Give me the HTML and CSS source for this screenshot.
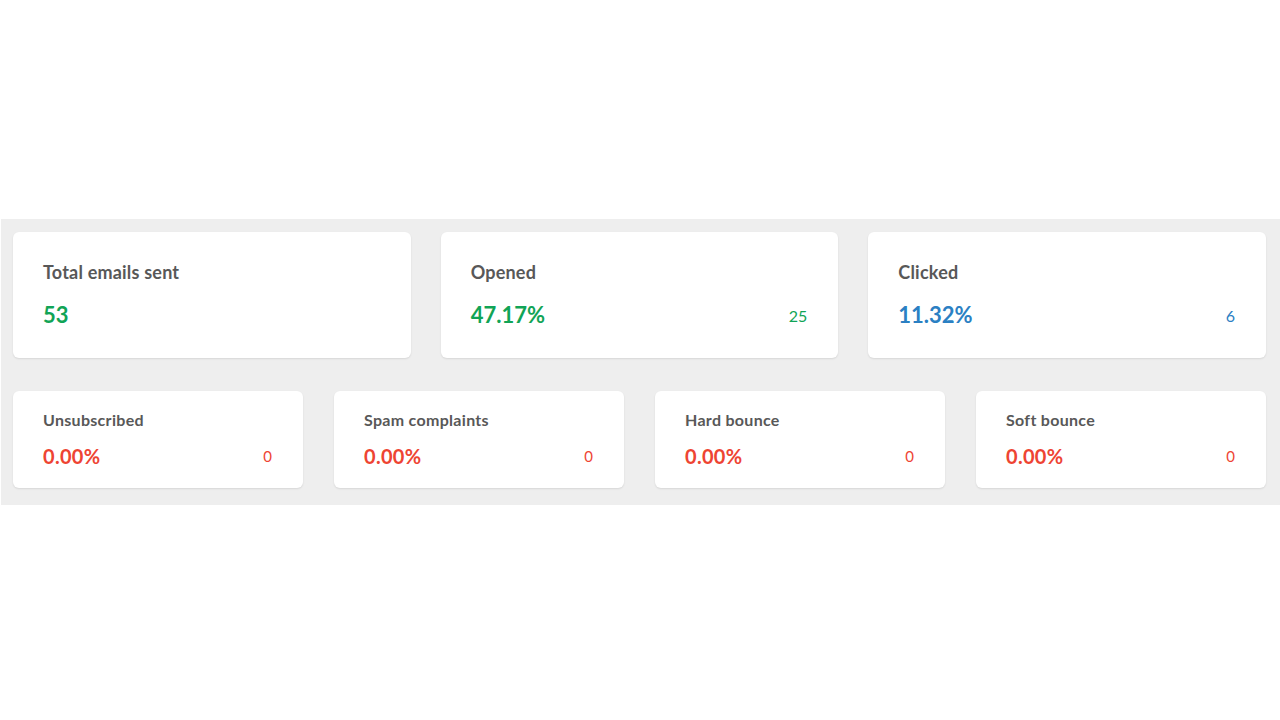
FILE: index.html
```html
<!DOCTYPE html>
<html>
<head>
<meta charset="utf-8">
<link rel="stylesheet" href="styles.css">
</head>
<body>
<div class="page">
  <section class="band">
    <div class="row row-top">
      <div class="card card-lg">
        <div class="title">Total emails sent</div>
        <div class="line"><span class="value green">53</span></div>
      </div>
      <div class="card card-lg">
        <div class="title">Opened</div>
        <div class="line"><span class="value green">47.17%</span><span class="count green">25</span></div>
      </div>
      <div class="card card-lg">
        <div class="title">Clicked</div>
        <div class="line"><span class="value blue">11.32%</span><span class="count blue">6</span></div>
      </div>
    </div>
    <div class="row row-bottom">
      <div class="card card-sm">
        <div class="title">Unsubscribed</div>
        <div class="line"><span class="value red">0.00%</span><span class="count red">0</span></div>
      </div>
      <div class="card card-sm">
        <div class="title">Spam complaints</div>
        <div class="line"><span class="value red">0.00%</span><span class="count red">0</span></div>
      </div>
      <div class="card card-sm">
        <div class="title">Hard bounce</div>
        <div class="line"><span class="value red">0.00%</span><span class="count red">0</span></div>
      </div>
      <div class="card card-sm">
        <div class="title">Soft bounce</div>
        <div class="line"><span class="value red">0.00%</span><span class="count red">0</span></div>
      </div>
    </div>
  </section>
</div>
</body>
</html>
```
FILE: styles.css
```css
html, body {
  margin: 0;
  padding: 0;
  background: #ffffff;
  font-family: Lato, "Open Sans", "Liberation Sans", sans-serif;
}
.page {
  padding-top: 219px;
  padding-left: 1px;
}
.band {
  background: #eeeeee;
  padding: 13px 14px 17px 12px;
  display: flex;
  flex-direction: column;
  gap: 33px;
}
.row {
  display: flex;
}
.row-top { gap: 30px; }
.row-bottom { gap: 31px; }
.card {
  flex: 1 1 0;
  background: #ffffff;
  border-radius: 6px;
  box-shadow: 0 1px 2px rgba(0,0,0,0.10);
  box-sizing: border-box;
  display: flex;
  flex-direction: column;
}
.card-lg {
  height: 126px;
  padding: 29px 31px 0 30px;
}
.card-sm {
  height: 97px;
  padding: 19px 31px 0 30px;
}
.title {
  color: #585858;
  font-weight: 700;
}
.card-lg .title { font-size: 18px; line-height: 22px; letter-spacing: 0.2px; }
.card-sm .title { font-size: 16px; line-height: 20px; letter-spacing: 0.3px; }
.line {
  display: flex;
  justify-content: space-between;
  align-items: center;
}
.card-lg .line { margin-top: 18px; }
.card-sm .line { margin-top: 14px; }
.value { font-weight: 700; }
.card-lg .value { font-size: 22px; line-height: 28px; }
.card-sm .value { font-size: 20px; line-height: 24px; letter-spacing: 0.3px; }
.count { font-weight: 400; }
.card-lg .count { font-size: 16px; }
.card-sm .count { font-size: 15px; }
.green { color: #11a456; }
.blue { color: #2b80c3; }
.red { color: #ee4433; }
```
